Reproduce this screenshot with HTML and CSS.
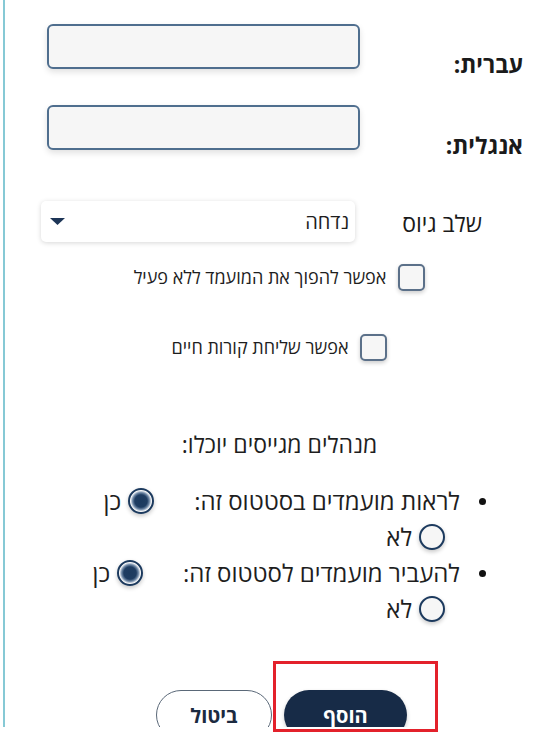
FILE: index.html
```html
<!DOCTYPE html>
<html lang="he" dir="rtl">
<head>
<meta charset="utf-8">
<title>סטטוס</title>
<link rel="stylesheet" href="styles.css">
</head>
<body>
<div class="page">
  <div class="field-row">
    <label class="field-label">עברית:</label>
    <input class="text-input" type="text">
  </div>
  <div class="field-row row-en">
    <label class="field-label">אנגלית:</label>
    <input class="text-input" type="text">
  </div>
  <div class="select-row">
    <span class="select-label">שלב גיוס</span>
    <div class="select-box">
      <span class="select-value">נדחה</span>
      <svg class="select-arrow" width="15" height="7" viewBox="0 0 15 7"><path d="M0 0H15L7.5 7Z" fill="#1d3557"/></svg>
    </div>
  </div>
  <label class="check-row check-1"><input type="checkbox" class="check"><span class="check-text">אפשר להפוך את המועמד ללא פעיל</span></label>
  <label class="check-row check-2"><input type="checkbox" class="check"><span class="check-text">אפשר שליחת קורות חיים</span></label>
  <h2 class="perm-title">מנהלים מגייסים יוכלו:</h2>
  <ul class="perm-list">
    <li class="perm-item">
      <span class="bullet-col"><span class="bullet"></span></span>
      <div class="perm-body">
        <div class="perm-line"><span class="perm-text">לראות מועמדים בסטטוס זה:</span><label class="radio-opt"><span class="radio checked"></span>כן</label></div>
        <div class="perm-line sub"><label class="radio-opt"><span class="radio"></span>לא</label></div>
      </div>
    </li>
    <li class="perm-item">
      <span class="bullet-col"><span class="bullet"></span></span>
      <div class="perm-body">
        <div class="perm-line"><span class="perm-text">להעביר מועמדים לסטטוס זה:</span><label class="radio-opt"><span class="radio checked"></span>כן</label></div>
        <div class="perm-line sub"><label class="radio-opt"><span class="radio"></span>לא</label></div>
      </div>
    </li>
  </ul>
  <div class="actions">
    <button class="btn btn-primary">הוסף</button>
    <button class="btn btn-secondary">ביטול</button>
  </div>
</div>
<div class="highlight"></div>
</body>
</html>
```

FILE: styles.css
```css
* { box-sizing: border-box; }
html, body { margin: 0; padding: 0; background: #fff; }
body {
  font-family: "Open Sans", "DejaVu Sans", sans-serif;
  color: #1e1e1e;
  direction: rtl;
  overflow: hidden;
}
.page {
  margin-left: 3px;
  border-left: 2px solid #86c9d5;
  height: 727px;
  overflow: hidden;
  padding-top: 24px;
}
.field-row {
  display: flex;
  align-items: flex-start;
  padding-right: 31px;
}
.row-en { margin-top: 26px; }
.field-label {
  flex: 0 0 163px;
  margin-top: 25px;
  font-size: 23px;
  font-weight: 700;
  line-height: 30px;
  color: #1a1a1a;
}
.text-input {
  width: 313px;
  height: 45px;
  margin: 0;
  padding: 0 10px;
  border: 2px solid #4f6e8e;
  border-radius: 6px;
  background: #f6f6f6;
  box-shadow: 0 3px 6px rgba(0, 0, 0, 0.12);
  appearance: none;
  font: inherit;
}
.select-row {
  display: flex;
  align-items: flex-start;
  margin-top: 41px;
  padding-right: 72px;
}
.select-label {
  flex: 0 0 127px;
  height: 41px;
  font-size: 23px;
  line-height: 45px;
  color: #1a1a1a;
}
.select-box {
  width: 314px;
  height: 41px;
  display: flex;
  align-items: center;
  justify-content: space-between;
  padding: 0 6px 0 9px;
  background: #fff;
  border-radius: 5px;
  box-shadow: 0 1px 5px rgba(0, 0, 0, 0.16);
  font-size: 20px;
  color: #1e1e1e;
}
.select-arrow { display: block; }
.check-row {
  display: flex;
  justify-content: center;
  align-items: center;
  gap: 12px;
  height: 27px;
  font-size: 18px;
  line-height: 27px;
}
.check-1 { margin-top: 22px; }
.check-2 { margin-top: 43px; }
.check {
  appearance: none;
  margin: 0;
  width: 27px;
  height: 27px;
  border: 2px solid #5b7089;
  border-radius: 5px;
  background: #f6f6f6;
  box-shadow: 0 2px 4px rgba(0, 0, 0, 0.2);
}
.perm-title {
  margin: 69px 0 0;
  font-size: 23px;
  font-weight: 400;
  line-height: 28px;
  text-align: center;
  color: #1e1e1e;
}
.perm-list {
  list-style: none;
  margin: 25px 0 0;
  padding: 0 50px 0 0;
}
.perm-item { display: flex; }
.bullet-col {
  flex: 0 0 44px;
  height: 36px;
  display: flex;
  align-items: center;
  justify-content: center;
}
.bullet {
  width: 7px;
  height: 7px;
  border-radius: 50%;
  background: #111;
}
.perm-body { display: flex; flex-direction: column; }
.perm-line {
  display: flex;
  align-items: center;
  height: 36px;
  font-size: 24px;
  line-height: 36px;
}
.perm-line.sub { padding-right: 15px; }
.perm-text { margin-left: 40px; }
.radio-opt { display: flex; align-items: center; gap: 7px; }
.radio {
  width: 26px;
  height: 26px;
  border-radius: 50%;
  border: 2px solid #1c3a5e;
  background: #f6f6f6;
  box-shadow: 0 2px 4px rgba(0, 0, 0, 0.22);
}
.radio.checked {
  background: radial-gradient(circle, #1c3a5e 0, #1f3d62 40%, #6f88a6 54%, #ffffff 68%);
}
.actions {
  display: flex;
  justify-content: center;
  gap: 12px;
  margin-top: 63px;
  padding-left: 4px;
}
.btn {
  height: 50px;
  border-radius: 25px;
  font-family: "Open Sans", "DejaVu Sans", sans-serif;
  font-size: 20px;
  font-weight: 700;
  padding: 0;
}
.btn-primary {
  width: 123px;
  background: #172b47;
  color: #fff;
  border: none;
  box-shadow: 0 2px 4px rgba(0, 0, 0, 0.2);
}
.btn-secondary {
  width: 116px;
  background: #fff;
  color: #1b2a40;
  border: 1px solid #5a6878;
}
.highlight {
  position: absolute;
  left: 273px;
  top: 661px;
  width: 165px;
  height: 71px;
  border: 3px solid #e3212b;
}
```
